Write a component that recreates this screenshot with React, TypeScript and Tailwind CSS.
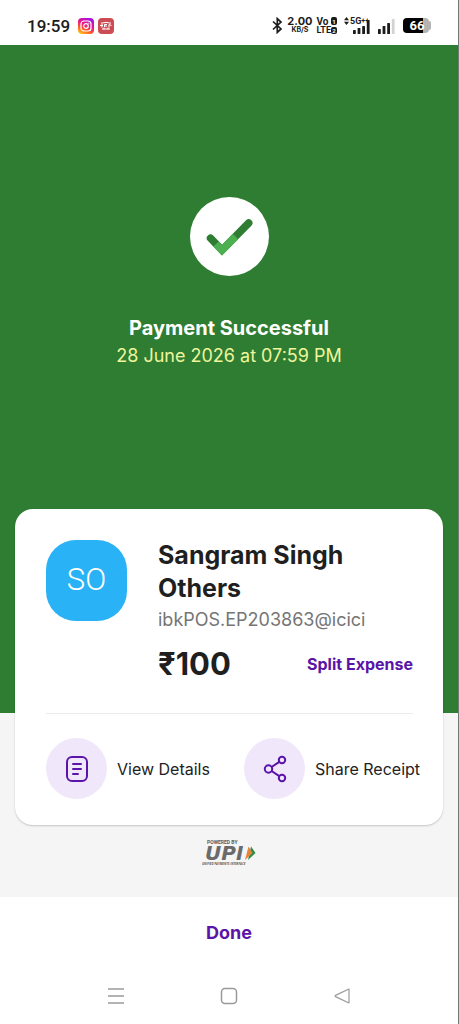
import type { ReactNode } from "react";

const ACTIONS = [
  { id: "details", label: "View Details", icon: <DetailsIcon /> },
  { id: "share", label: "Share Receipt", icon: <ShareIcon /> },
];

function InstagramIcon() {
  return (
    <svg viewBox="0 0 16 16" className="size-4" aria-hidden="true">
      <defs>
        <linearGradient id="insta" x1="0.2" y1="1" x2="0.7" y2="0">
          <stop offset="0" stopColor="#ffc21a" />
          <stop offset="0.3" stopColor="#ff5a2c" />
          <stop offset="0.6" stopColor="#e9148c" />
          <stop offset="1" stopColor="#a312e8" />
        </linearGradient>
      </defs>
      <rect width="16" height="16" rx="4" fill="url(#insta)" />
      <rect x="3" y="3" width="10" height="10" rx="3" fill="none" stroke="#fff" strokeWidth="1.2" />
      <circle cx="8" cy="8" r="2.3" fill="none" stroke="#fff" strokeWidth="1.2" />
      <circle cx="10.9" cy="5.1" r="0.7" fill="#fff" />
    </svg>
  );
}

function TicketAppIcon() {
  return (
    <svg viewBox="0 0 16 16" className="size-4" aria-hidden="true">
      <rect width="16" height="16" rx="4" fill="#cc4c54" />
      <g fill="none" stroke="#fff" strokeWidth="1">
        <path d="M3 5.2Q8 3.6 13 5.2M2 7.5h3M4 6v3.5M6.5 9V6.5H9M6.5 8H9M11 9.5V6.5l2.5 1M4 11h8M6 9.5v2M10 9.5v2" />
      </g>
    </svg>
  );
}

function BluetoothIcon() {
  return (
    <svg viewBox="0 0 11 17" className="h-[17px] w-[11px]" fill="none" stroke="#1b1b1b" strokeWidth="1.7" aria-hidden="true">
      <path d="M1 4.5 9 12l-3.7 3.4V1.6L9 5 1 12.5" />
    </svg>
  );
}

function SignalIcon({ heights, faded }: { heights: number[]; faded?: boolean }) {
  return (
    <svg viewBox="0 0 17 15" className="h-[15px] w-[17px]" aria-hidden="true">
      {heights.map((h, i) => (
        <rect
          key={h}
          x={i * 4.6}
          y={15 - h}
          width="2.8"
          height={h}
          rx="0.6"
          fill={faded && i === heights.length - 1 ? "#d2d2d2" : "#1b1b1b"}
        />
      ))}
    </svg>
  );
}

function StatusBar() {
  return (
    <header className="flex h-[45px] items-center justify-between bg-white px-[27px] pt-[15px] pb-[9px] text-[#1b1b1b]">
      <div className="flex h-5 items-center">
        <span className="font-[Roboto,sans-serif] text-[17px] leading-5 font-medium">19:59</span>
        <span className="ml-2 flex gap-1">
          <InstagramIcon />
          <TicketAppIcon />
        </span>
      </div>

      <div className="flex h-5 items-center">
        <BluetoothIcon />
        <div className="ml-1 flex flex-col items-center font-[Inter,sans-serif] font-bold">
          <span className="text-[11px] leading-[9px]">2.00</span>
          <span className="text-[7px] leading-[8px]">KB/S</span>
        </div>
        <div className="ml-1 flex flex-col font-[Roboto,sans-serif] font-bold">
          <span className="flex items-center justify-between text-[10px] leading-[9px]">
            Vo
            <span className="flex h-[8px] w-[6px] items-center justify-center rounded-xs bg-[#1b1b1b] text-[6px] text-white">1</span>
          </span>
          <span className="flex items-center text-[9px] leading-[9px]">
            LTE
            <span className="flex h-[7px] w-[6px] items-center justify-center rounded-xs bg-[#1b1b1b] text-[6px] text-white">2</span>
          </span>
        </div>
        <div className="relative ml-4 h-[17px] w-[17px] pt-[2px]">
          <span className="absolute -left-[9px] top-0 flex items-center font-[Roboto,sans-serif] text-[9px] leading-[8px] font-bold">
            <svg viewBox="0 0 5 8" className="mr-px h-2 w-[5px]" aria-hidden="true">
              <path d="M0 3.3 2.5 0 5 3.3zM0 4.7h5L2.5 8z" fill="#1b1b1b" />
            </svg>
            5G
            <span className="text-[7px] leading-[5px]">++</span>
          </span>
          <SignalIcon heights={[4, 6, 8, 14]} />
        </div>
        <div className="ml-2 pt-[2px]">
          <SignalIcon heights={[5, 8, 11, 15]} faded />
        </div>
        <div className="ml-2 flex items-center">
          <span className="flex h-[15px] w-[26px] items-center justify-center rounded-[4px] bg-linear-to-r from-black from-75% to-[#b3b3b3] to-75% pl-[2px] font-[Roboto,sans-serif] text-[13px] font-bold text-white">
            66
          </span>
          <span className="h-[9px] w-[2px] rounded-r-full bg-[#b3b3b3]" />
        </div>
      </div>
    </header>
  );
}

function SuccessBadge() {
  return (
    <div className="flex size-[79px] items-center justify-center rounded-full bg-white">
      <svg viewBox="0 0 79 79" className="size-full" fill="none" strokeWidth="7.5" aria-label="Success" role="img">
        <path d="M20.500 41.200 32 53.200 58.700 26" stroke="#2e7d32" strokeLinecap="round" />
        <path d="M26 47 32 53.200 45.500 39.500" stroke="#4caf50" />
      </svg>
    </div>
  );
}

function DetailsIcon() {
  return (
    <svg viewBox="0 0 24 28" className="h-7 w-6" fill="none" stroke="#5a14a8" strokeWidth="2" strokeLinecap="round" aria-hidden="true">
      <rect x="2" y="2" width="20" height="24" rx="5" />
      <path d="M8 9h8M8 14h8M8 19h5" />
    </svg>
  );
}

function ShareIcon() {
  return (
    <svg viewBox="0 0 24 28" className="h-7 w-6" fill="none" stroke="#5a14a8" strokeWidth="2" aria-hidden="true">
      <circle cx="5.500" cy="14" r="3.700" />
      <circle cx="19" cy="5" r="3.200" />
      <circle cx="19" cy="23" r="3.200" />
      <path d="m8.600 12 7.700-5.200M8.600 16l7.700 5.200" />
    </svg>
  );
}

function UpiLogo() {
  return (
    <svg viewBox="0 0 54 28" className="h-7 w-[54px]" role="img" aria-label="Powered by UPI">
      <g fill="#5c5c5c">
        <text x="5" y="5" fontFamily="Roboto, sans-serif" fontSize="5" fontWeight="700">
          POWERED BY
        </text>
        <text x="3" y="21" fontFamily="DejaVu Sans, sans-serif" fontSize="20" fontWeight="700" fontStyle="oblique" fill="#6b6b6b">
          UPI
        </text>
        <text x="0" y="26" fontFamily="Open Sans, sans-serif" fontSize="3" fontWeight="700" fontStyle="italic">
          UNIFIED PAYMENTS INTERFACE
        </text>
      </g>
      <path d="M49 7.500 53.500 14 46 21z" fill="#2e8b4a" />
      <path d="M46.500 7.500 50.500 14 43 21z" fill="#e8833a" />
    </svg>
  );
}

function ActionButton({ label, icon }: { label: string; icon: ReactNode }) {
  return (
    <button type="button" className="flex items-center gap-[10px] text-[16px] leading-5 whitespace-nowrap text-[#222222]">
      <span className="flex size-[61px] shrink-0 items-center justify-center rounded-full bg-[#f1e7fb]">{icon}</span>
      {label}
    </button>
  );
}

function NavBar() {
  return (
    <nav className="flex h-14 items-center justify-center gap-[95px] text-[#9a9a9a]">
      <button type="button" aria-label="Recent apps">
        <svg viewBox="0 0 18 18" className="size-[18px]" stroke="currentColor" strokeWidth="1.500">
          <path d="M1 2h16M1 9h16M1 16h16" />
        </svg>
      </button>
      <button type="button" aria-label="Home">
        <svg viewBox="0 0 18 18" className="size-[18px]" fill="none" stroke="currentColor" strokeWidth="1.500">
          <rect x="1.500" y="1.500" width="15" height="15" rx="3.500" />
        </svg>
      </button>
      <button type="button" aria-label="Back">
        <svg viewBox="0 0 18 18" className="size-[18px]" fill="none" stroke="currentColor" strokeWidth="1.200" strokeLinejoin="round">
          <path d="M16 2.500v13q0 .6-.6.300L2.500 9.600q-1-.6 0-1.200L15.400 2.200Q16 1.900 16 2.500Z" />
        </svg>
      </button>
    </nav>
  );
}

export default function App() {
  return (
    <div className="flex min-h-screen flex-col border-r border-[#777777] bg-[#f5f5f5] font-[Inter,sans-serif]">
      <StatusBar />

      <section className="flex flex-col items-center bg-[#2e7d32] pt-[152px] pb-[344px] text-center">
        <SuccessBadge />
        <h1 className="mt-[37px] text-[20px] leading-[30px] font-bold text-white">Payment Successful</h1>
        <p className="text-[18px] leading-[26px] text-[#eff59b]">28 June 2026 at 07:59 PM</p>
      </section>

      <main className="mx-[15px] -mt-[204px] rounded-[18px] bg-white pt-[30px] pr-[30px] pb-[26px] pl-[31px] shadow-[0_1px_2px_rgba(0,0,0,0.2)]">
        <div className="flex gap-[31px]">
          <div className="mt-px flex size-[81px] shrink-0 items-center justify-center rounded-[30px] bg-[#29b2f5] font-[Roboto,sans-serif] text-[31px] font-light text-white">
            SO
          </div>
          <div className="min-w-0 flex-1">
            <h2 className="text-[25px] leading-[33px] font-bold text-[#1f1f1f]">Sangram Singh Others</h2>
            <p className="text-[18px] leading-[30px] text-[#757575]">ibkPOS.EP203863@icici</p>
            <div className="mt-[9px] flex items-center justify-between">
              <span className="text-[31px] leading-10 font-bold text-[#1f1f1f]">₹100</span>
              <button type="button" className="text-[16px] leading-5 font-bold text-[#5a14a8]">
                Split Expense
              </button>
            </div>
          </div>
        </div>

        <hr className="mt-[29px] border-[#ebebeb]" />

        <div className="mt-6 -mr-[29px] grid grid-cols-2">
          {ACTIONS.map((action) => (
            <ActionButton key={action.id} label={action.label} icon={action.icon} />
          ))}
        </div>
      </main>

      <div className="flex justify-center pt-[14px] pb-[30px]">
        <UpiLogo />
      </div>

      <footer className="flex flex-1 flex-col bg-white">
        <button type="button" className="h-[71px] text-[18px] font-bold text-[#5a14a8]">
          Done
        </button>
        <NavBar />
      </footer>
    </div>
  );
}
